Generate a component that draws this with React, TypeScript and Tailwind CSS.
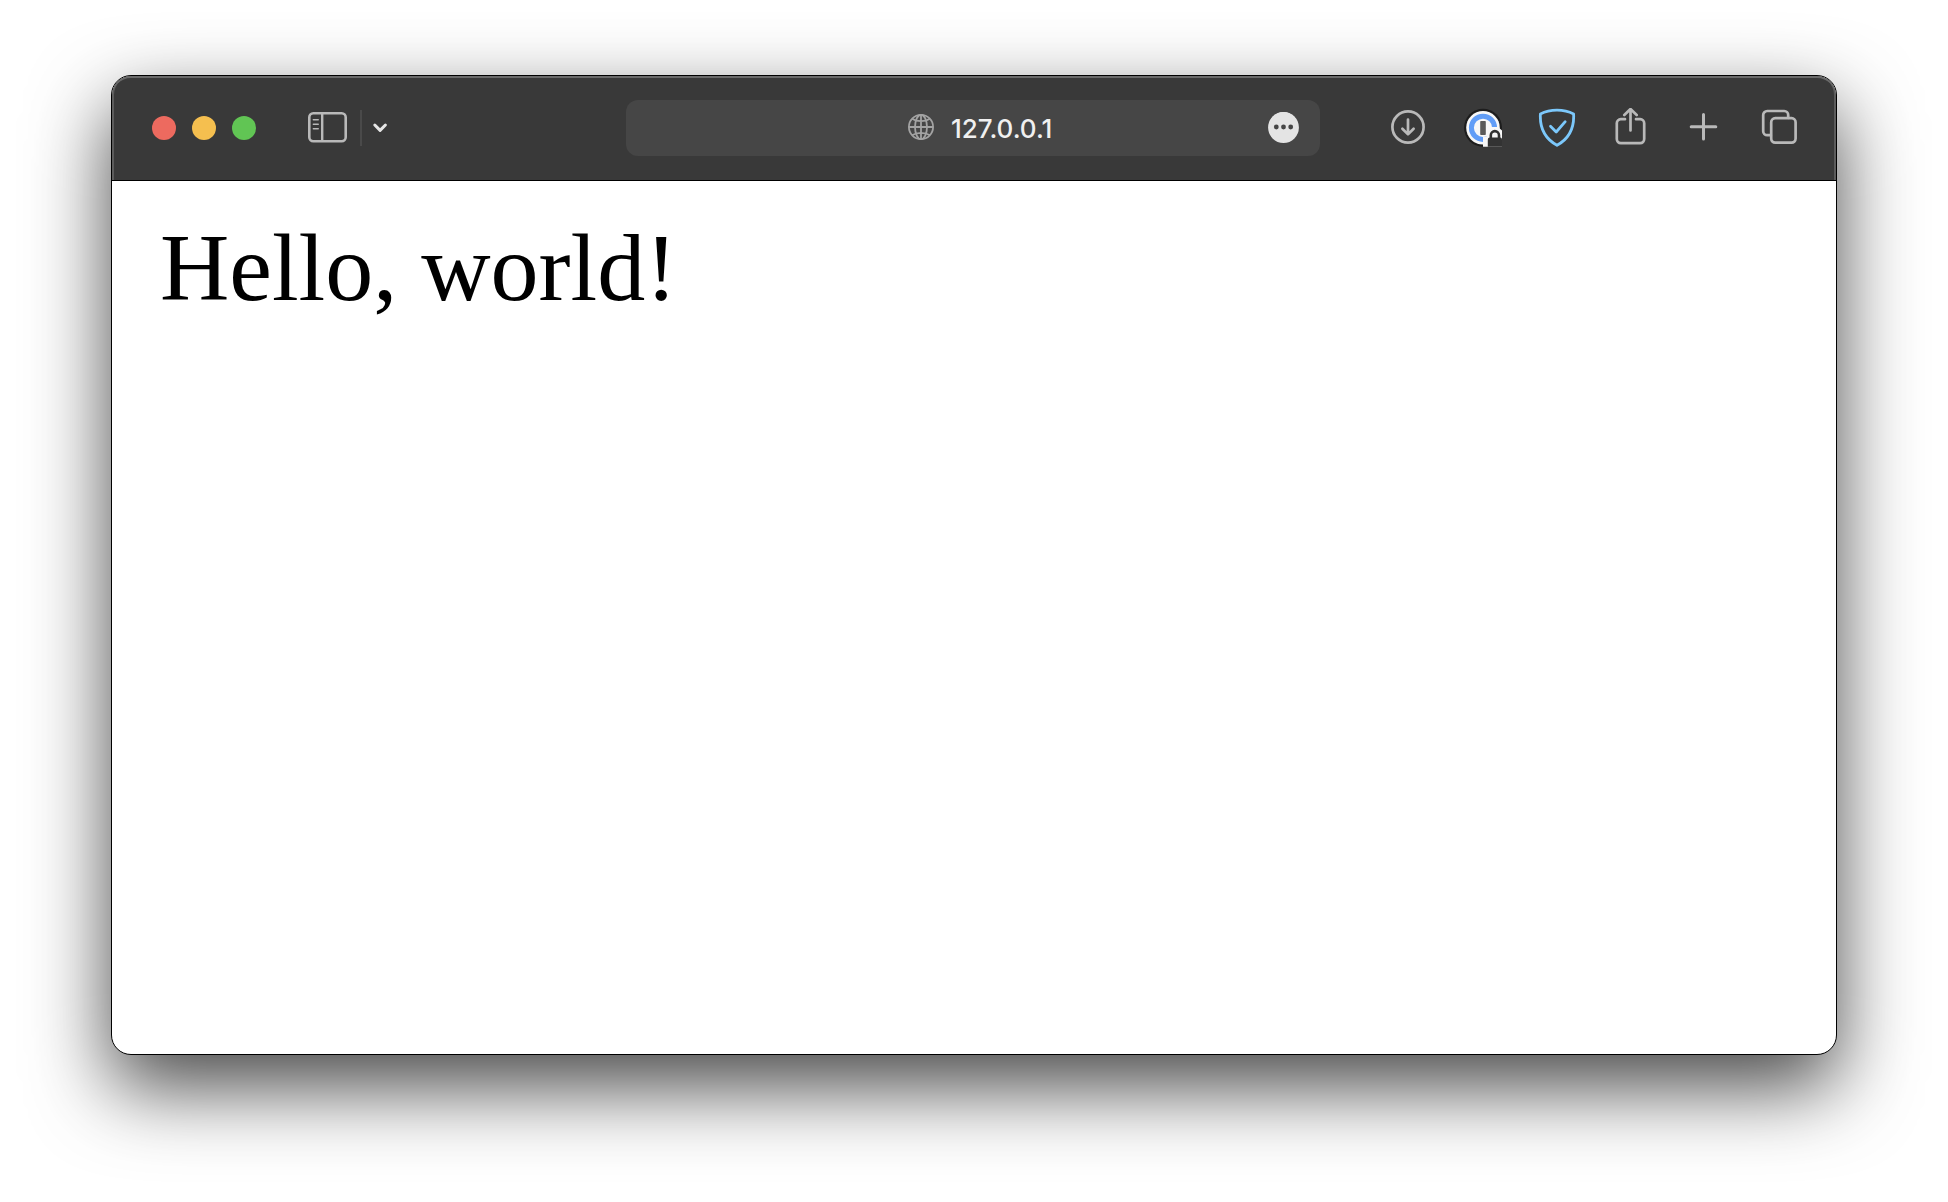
import React from "react";

type IconButtonProps = { label: string; children: React.ReactNode };

function ToolbarButton({ label, children }: IconButtonProps) {
  return (
    <button type="button" aria-label={label} className="size-10 shrink-0 text-[#b9b9b9]">
      <svg
        viewBox="0 0 40 40"
        className="size-10"
        fill="none"
        stroke="currentColor"
        strokeWidth="2.7"
        strokeLinecap="round"
        strokeLinejoin="round"
        aria-hidden="true"
      >
        {children}
      </svg>
    </button>
  );
}

function WindowControls() {
  return (
    <div className="flex gap-4">
      <button type="button" aria-label="Close" className="size-6 rounded-full bg-[#ed6a5f]" />
      <button type="button" aria-label="Minimize" className="size-6 rounded-full bg-[#f5bf4f]" />
      <button type="button" aria-label="Zoom" className="size-6 rounded-full bg-[#61c554]" />
    </div>
  );
}

function SidebarControls() {
  return (
    <div className="ml-[52px] flex items-center">
      <button type="button" aria-label="Show sidebar" className="h-8 w-10 text-[#b9b9b9]">
        <svg viewBox="0 0 40 32" className="h-8 w-10" fill="none" stroke="currentColor" aria-hidden="true">
          <rect x="1.3" y="1.3" width="36.4" height="28" rx="4" strokeWidth="2.6" />
          <path d="M14.2 1.5v27.5" strokeWidth="2.4" />
          <path d="M5.4 7.800h4.800M5.400 12.200h4.800M5.400 16.800h4.800" strokeWidth="1.6" strokeLinecap="round" />
        </svg>
      </button>
      <span className="ml-3 h-9 w-0.5 bg-[#4a4a4a]" />
      <button type="button" aria-label="Tab groups" className="ml-2 size-6 text-[#e6e6e6]">
        <svg viewBox="0 0 24 24" className="size-6" fill="none" stroke="currentColor" aria-hidden="true">
          <path d="M4.8 9l5.3 5.4L15.4 9" strokeWidth="3" strokeLinecap="round" strokeLinejoin="round" />
        </svg>
      </button>
    </div>
  );
}

function AddressBar() {
  return (
    <div className="relative flex h-14 items-center justify-center rounded-xl bg-[#464646] pl-6">
      <svg
        viewBox="0 0 28 28"
        className="mr-4 size-7 text-[#a3a3a3]"
        fill="none"
        stroke="currentColor"
        strokeWidth="1.8"
        aria-hidden="true"
      >
        <circle cx="14" cy="13" r="12.1" />
        <ellipse cx="14" cy="13" rx="6" ry="12.1" />
        <path d="M14 .9v24.2M1.9 13h24.2M5 4.800c5 3.200 13 3.200 18 0M5 21.200c5-3.200 13-3.200 18 0" />
      </svg>
      <input
        aria-label="Address"
        type="text"
        defaultValue="127.0.0.1"
        className="w-28 bg-transparent pt-0.5 font-['Inter',sans-serif] text-[26px] leading-8 font-medium text-[#f0f0f0] outline-none"
      />
      <button type="button" aria-label="Page menu" className="absolute right-5 size-8">
        <svg viewBox="0 0 32 32" className="size-8" aria-hidden="true">
          <circle cx="15.5" cy="14.5" r="14.500" fill="#e4e4e4" />
          <circle cx="15.5" cy="15.5" r="15.4" fill="#e4e4e4" />
          <g fill="#464646">
            <circle cx="8.3" cy="15" r="2.4" />
            <circle cx="15.5" cy="15" r="2.4" />
            <circle cx="22.7" cy="15" r="2.4" />
          </g>
        </svg>
      </button>
    </div>
  );
}

function ToolbarActions() {
  return (
    <div className="flex items-center justify-end gap-[34px]">
      <ToolbarButton label="Downloads">
        <circle cx="18" cy="19" r="15.6" />
        <path d="M18 11.6v14.6M12.4 20.8l5.6 5.6 5.6-5.6" />
      </ToolbarButton>
      <ToolbarButton label="1Password">
        <g stroke="none">
          <circle cx="19" cy="19.8" r="19" fill="#1d1d1d" />
          <circle cx="19" cy="19.8" r="16.8" fill="#f7f7f7" />
          <circle cx="19" cy="19.8" r="11.6" fill="none" stroke="#619df7" strokeWidth="5" />
          <rect x="16.200" y="13" width="5.600" height="14" rx=".8" fill="#5a5a5a" />
          <path d="M19 38.800V28.500h3.500V24l4.500-5h7l4 3.500v16.300z" fill="#f7f7f7" />
          <path d="M23.800 38.800v-7.300a2 2 0 0 1 2-2h10.400a2 2 0 0 1 1.800 2v7.300z" fill="#333" />
          <path d="M26.800 30v-2.800a4.100 4.100 0 0 1 8.200 0V30" fill="none" stroke="#333" strokeWidth="2.6" />
        </g>
      </ToolbarButton>
      <ToolbarButton label="AdGuard">
        <g stroke="#7cc8fb" strokeWidth="2.8">
          <path d="M19 2.100C13 2.100 7 3.500 2.400 5.900c-.8 14 5 25 16.600 31.400C30.600 30.900 36.400 19.900 35.600 5.900 31 3.500 25 2.100 19 2.100z" />
          <path d="M12.500 18.300l5.700 5.700 9-10.300" />
        </g>
      </ToolbarButton>
      <ToolbarButton label="Share">
        <path
          d="M13 10.800H8.800a4 4 0 0 0-4 4v15.900a4 4 0 0 0 4 4h19.400a4 4 0 0 0 4-4V14.800a4 4 0 0 0-4-4H24M18.500 22V.9M12.300 6.600l6.200-6 6.200 6"
          transform="translate(0 .4)"
        />
      </ToolbarButton>
      <ToolbarButton label="New tab">
        <path d="M17.500 6.500v24.500M5.200 18.700h24.600" strokeWidth="3" />
      </ToolbarButton>
      <ToolbarButton label="Show tab overview">
        <rect x="11.200" y="10.200" width="24.400" height="24.400" rx="4" />
        <path d="M10.800 27.200H7.200a4 4 0 0 1-4-4V7a4 4 0 0 1 4-4h17a4 4 0 0 1 4 4v2.800" />
      </ToolbarButton>
    </div>
  );
}

export default function App() {
  return (
    <div className="flex min-h-screen flex-col bg-white px-[111px] pt-[75px] pb-[147px]">
      <div className="flex grow flex-col overflow-hidden rounded-[20px] border border-black bg-white shadow-[0_32px_80px_rgba(0,0,0,0.72)]">
        <header className="grid grid-cols-[474fr_694fr_480fr] items-center rounded-t-[19px] border-b border-black bg-[#393939] py-6 pr-9 pl-10 shadow-[inset_0_2px_0_#6a6a6a,inset_2px_0_0_#5c5c5c,inset_-2px_0_0_#5c5c5c]">
          <div className="flex items-center">
            <WindowControls />
            <SidebarControls />
          </div>
          <AddressBar />
          <ToolbarActions />
        </header>
        <main className="px-12 pt-8">
          <h1 className="font-['Liberation_Serif',serif] text-[96px] leading-[110px] text-black">Hello, world!</h1>
        </main>
      </div>
    </div>
  );
}
